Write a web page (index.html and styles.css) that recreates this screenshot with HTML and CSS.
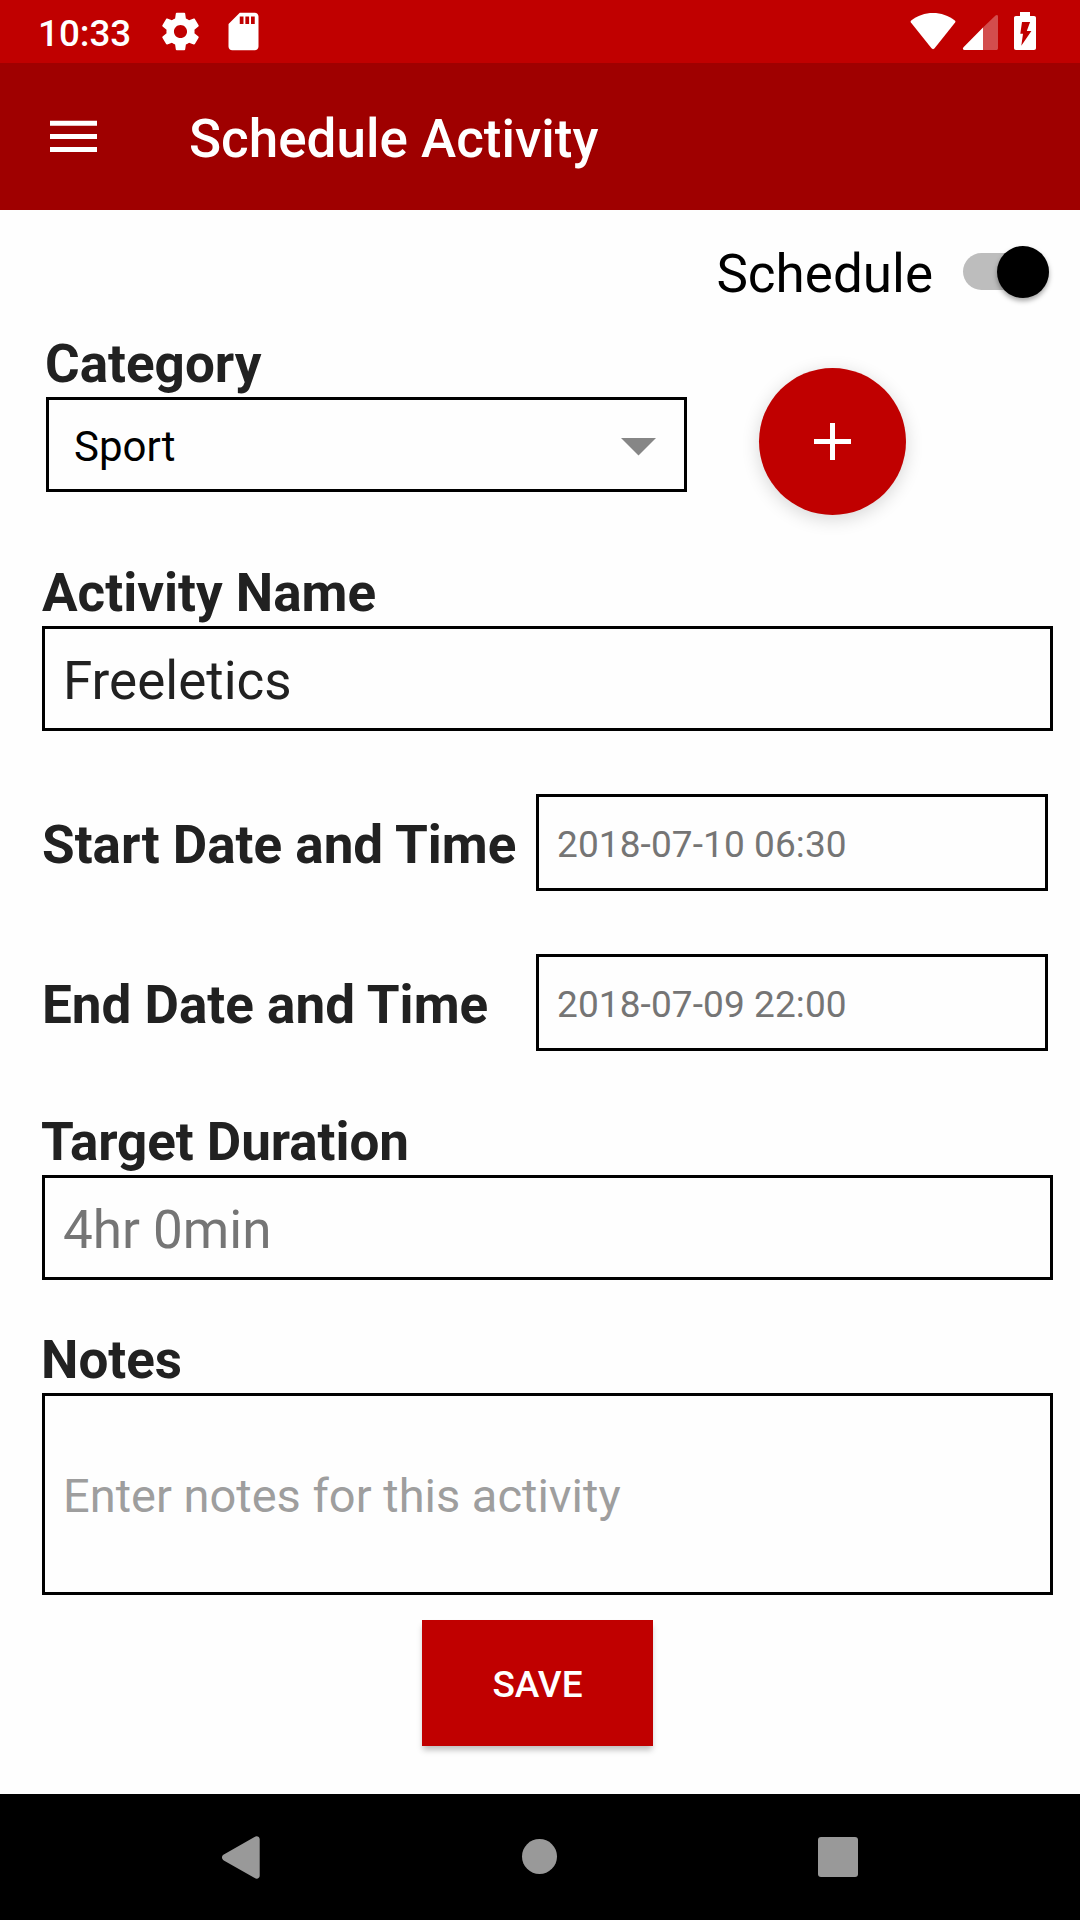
FILE: index.html
```html
<!DOCTYPE html>
<html lang="en">
<head>
<meta charset="utf-8">
<title>Schedule Activity</title>
<link rel="stylesheet" href="styles.css">
</head>
<body>
<div class="screen">
  <div class="status-bar">
    <span class="clock">10:33</span>
    <svg class="icon-gear" viewBox="0 0 24 24"><path d="M19.43 12.98c.04-.32.07-.64.07-.98s-.03-.66-.07-.98l2.11-1.65c.19-.15.24-.42.12-.64l-2-3.46c-.12-.22-.39-.3-.61-.22l-2.49 1c-.52-.4-1.08-.73-1.69-.98l-.38-2.65C14.46 2.18 14.25 2 14 2h-4c-.25 0-.46.18-.49.42l-.38 2.65c-.61.25-1.17.59-1.69.98l-2.49-1c-.23-.09-.49 0-.61.22l-2 3.46c-.13.22-.07.49.12.64l2.11 1.65c-.04.32-.07.65-.07.98s.03.66.07.98l-2.11 1.65c-.19.15-.24.42-.12.64l2 3.46c.12.22.39.3.61.22l2.49-1c.52.4 1.08.73 1.69.98l.38 2.65c.03.24.24.42.49.42h4c.25 0 .46-.18.49-.42l.38-2.65c.61-.25 1.17-.59 1.69-.98l2.49 1c.23.09.49 0 .61-.22l2-3.46c.12-.22.07-.49-.12-.64l-2.11-1.65zM12 15.5c-1.93 0-3.5-1.57-3.5-3.5s1.57-3.5 3.5-3.5 3.5 1.57 3.5 3.5-1.57 3.5-3.5 3.5z"/></svg>
    <svg class="icon-sd" viewBox="0 0 24 24"><path d="M18 2h-8L4.02 8 4 20c0 1.1.9 2 2 2h12c1.1 0 2-.9 2-2V4c0-1.1-.9-2-2-2zm-6 6h-2V4h2v4zm3 0h-2V4h2v4zm3 0h-2V4h2v4z"/></svg>
    <svg class="icon-system" viewBox="0 0 132 63">
      <path d="M1.2 20.5C7.500 15.500 15 13 23 13s15.500 2.500 21.800 7.500c.8.700.8 1.300.3 2L24.600 48.300c-.9 1.100-2.200 1.100-3.100 0L.9 22.500c-.5-.700-.4-1.400.3-2z"/>
      <path class="faint" d="M73 27.500 85.500 15.500c1.300-1 2.500-.500 2.500 1V48c0 1.400-.6 2-2 2H73z"/>
      <path d="M73 27.500V50H54.500c-1.600 0-2.200-1.500-1-2.700z"/>
      <path fill-rule="evenodd" d="M110 12h10v4h4c1.300 0 2 .7 2 2v30c0 1.300-.7 2-2 2h-18c-1.300 0-2-.7-2-2V18c0-1.300.7-2 2-2h4zM112 22l-1.700 11.700h2.700l-1.700 12L121.400 31h-4.600l3.300-9z"/>
    </svg>
  </div>
  <header class="app-bar">
    <svg class="menu" viewBox="0 0 48 32"><path d="M0 .8h47v5H0zM0 13.900h47v5H0zM0 27h47v5H0z"/></svg>
    <h1 class="title">Schedule Activity</h1>
  </header>
  <main class="form">
    <div class="switch-row">
      <span class="switch-label">Schedule</span>
      <span class="switch"><span class="thumb"></span></span>
    </div>
    <div class="category-row">
      <div class="category">
        <div class="label">Category</div>
        <div class="box select"><span>Sport</span><svg class="caret" viewBox="0 0 35 18"><path d="M0 0h35L17.500 17.500z"/></svg></div>
      </div>
      <div class="fab"><svg class="plus" viewBox="0 0 37 37"><path d="M16 0h5v16h16v5H21v16h-5V21H0v-5h16z"/></svg></div>
    </div>
    <div class="field name">
      <div class="label">Activity Name</div>
      <div class="box">Freeletics</div>
    </div>
    <div class="date-row">
      <div class="label">Start Date and Time</div>
      <div class="box date">2018-07-10 06:30</div>
    </div>
    <div class="date-row">
      <div class="label">End Date and Time</div>
      <div class="box date">2018-07-09 22:00</div>
    </div>
    <div class="field duration">
      <div class="label">Target Duration</div>
      <div class="box muted">4hr 0min</div>
    </div>
    <div class="field notes">
      <div class="label">Notes</div>
      <div class="box hint">Enter notes for this activity</div>
    </div>
    <div class="save">SAVE</div>
  </main>
  <nav class="nav-bar">
    <svg class="nav-back" viewBox="0 0 38 43"><path d="M1.800 18.600 32.500.9C35 -.4 37.700.8 37.700 3.300v36.500c0 2.500-2.700 3.600-5 2.300L1.800 24.400c-2.400-1.500-2.400-4.300 0-5.800z"/></svg>
    <span class="nav-home"></span>
    <span class="nav-recent"></span>
  </nav>
</div>
</body>
</html>
```
FILE: styles.css
```css
* { box-sizing: border-box; }
body {
  margin: 0;
  font-family: Roboto, "Liberation Sans", sans-serif;
  font-size: 53px;
  line-height: 62px;
  color: #212121;
  background: #fefefe;
}
svg { display: block; flex: none; }
.screen {
  width: 1080px;
  height: 1920px;
  display: flex;
  flex-direction: column;
  overflow: hidden;
}

.status-bar {
  height: 63px;
  display: flex;
  align-items: flex-start;
  padding-left: 38px;
  background: #c00000;
  color: #fff;
  fill: #fff;
}
.clock {
  width: 120px;
  padding-top: 12px;
  font-size: 36.75px;
  line-height: 43px;
  font-weight: 500;
}
.icon-gear, .icon-sd { width: 45px; height: 45px; margin-top: 9px; }
.icon-sd { margin-left: 18px; }
.icon-system { width: 132px; height: 63px; margin-left: auto; margin-right: 38px; }
.faint { opacity: .3; }

.app-bar {
  height: 147px;
  display: flex;
  align-items: flex-start;
  padding-left: 50px;
  background: #9f0000;
  color: #fff;
}
.menu { width: 48px; height: 32px; margin-top: 57px; fill: #fff; }
.title {
  margin: 45px 0 0 91px;
  font-size: 53px;
  line-height: 62px;
  font-weight: 500;
}

.form { flex: 1; padding: 33px 27px 0 42px; }
.label { font-weight: 700; white-space: nowrap; }
.box { border: 3px solid #000; padding: 21px 18px; height: 105px; }
.field .box, .category .box { margin-top: 2px; }

.switch-row {
  height: 62px;
  display: flex;
  align-items: flex-start;
  justify-content: flex-end;
  gap: 30px;
  padding-right: 4px;
  color: #000;
}
.switch {
  width: 86px;
  height: 37px;
  margin-top: 10px;
  border-radius: 19px;
  background: #bdbdbd;
  display: flex;
  justify-content: flex-end;
  align-items: center;
}
.thumb {
  width: 52px;
  height: 52px;
  flex: none;
  border-radius: 50%;
  background: #000;
  box-shadow: 0 3px 5px rgba(0, 0, 0, .35);
}

.category-row { display: flex; gap: 72px; margin-top: 28px; padding-left: 4px; }
.category { width: 641px; }
.category .label { margin-left: -1px; }
.select {
  height: 95px;
  display: flex;
  justify-content: space-between;
  padding: 22px 28.5px 0 25px;
  font-size: 42px;
  line-height: 49px;
  color: #000;
}
.caret { width: 35px; height: 18px; margin-top: 16px; fill: #868686; }
.fab {
  width: 147px;
  height: 147px;
  margin-top: 35px;
  border-radius: 50%;
  background: #c00000;
  display: grid;
  place-items: center;
  box-shadow: 0 4px 18px rgba(0, 0, 0, .16);
}
.plus { width: 37px; height: 37px; fill: #fff; }

.name { margin-top: 47px; }
.date-row { display: flex; justify-content: space-between; margin-top: 63px; padding-right: 5px; }
.date-row .label { padding-top: 20px; }
.date {
  width: 512px;
  height: 97px;
  padding-top: 26px;
  font-size: 37px;
  line-height: 43px;
  letter-spacing: .1px;
  color: #757575;
}
.duration { margin-top: 60px; }
.duration .label { margin-left: -1px; letter-spacing: -.06px; }
.muted { color: #757575; }
.notes { margin-top: 49px; }
.notes .label { margin-left: -1px; }
.hint {
  height: 202px;
  padding-top: 72px;
  font-size: 47px;
  line-height: 56px;
  color: #9e9e9e;
}
.save {
  width: 231px;
  height: 126px;
  margin: 25px 0 0 380px;
  padding-top: 43px;
  background: #c00000;
  color: #fff;
  font-size: 37px;
  line-height: 43px;
  font-weight: 500;
  text-align: center;
  box-shadow: 0 5px 6px -1px rgba(0, 0, 0, .25);
}

.nav-bar {
  height: 126px;
  display: flex;
  align-items: center;
  justify-content: space-between;
  padding: 0 222px;
  background: #000;
}
.nav-back { width: 38px; height: 43px; fill: #999; }
.nav-home { width: 35px; height: 35px; margin-bottom: 1px; border-radius: 50%; background: #999; }
.nav-recent { width: 40px; height: 40px; border-radius: 3px; background: #999; }
```
